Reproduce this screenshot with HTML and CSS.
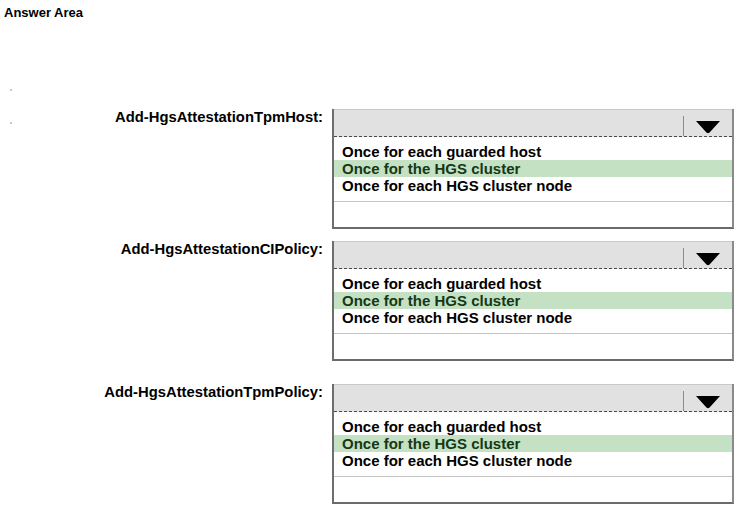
FILE: index.html
```html
<!DOCTYPE html>
<html lang="en">
<head>
<meta charset="utf-8">
<title>Answer Area</title>
<link rel="stylesheet" href="styles.css">
</head>
<body>
<main class="answer-area">
  <h1 class="title">Answer Area</h1>

  <div class="workspace">
    <div class="marks">
      <span class="mark"></span>
      <span class="mark"></span>
    </div>

    <div class="questions">
      <div class="question q1">
        <div class="label">Add-HgsAttestationTpmHost:</div>
        <div class="dropdown">
          <div class="dropdown-head">
            <span class="value"></span>
            <span class="toggle">
              <svg width="24" height="14" viewBox="0 0 24 14"><path d="M0 0H24L14.5 10.5Q12 14 9.5 10.5Z" fill="#000"/></svg>
            </span>
          </div>
          <ul class="options">
            <li>Once for each guarded host</li>
            <li class="selected">Once for the HGS cluster</li>
            <li>Once for each HGS cluster node</li>
          </ul>
          <div class="options-rest"></div>
        </div>
      </div>

      <div class="question q2">
        <div class="label">Add-HgsAttestationCIPolicy:</div>
        <div class="dropdown">
          <div class="dropdown-head">
            <span class="value"></span>
            <span class="toggle">
              <svg width="24" height="14" viewBox="0 0 24 14"><path d="M0 0H24L14.5 10.5Q12 14 9.5 10.5Z" fill="#000"/></svg>
            </span>
          </div>
          <ul class="options">
            <li>Once for each guarded host</li>
            <li class="selected">Once for the HGS cluster</li>
            <li>Once for each HGS cluster node</li>
          </ul>
          <div class="options-rest"></div>
        </div>
      </div>

      <div class="question q3">
        <div class="label">Add-HgsAttestationTpmPolicy:</div>
        <div class="dropdown">
          <div class="dropdown-head">
            <span class="value"></span>
            <span class="toggle">
              <svg width="24" height="14" viewBox="0 0 24 14"><path d="M0 0H24L14.5 10.5Q12 14 9.5 10.5Z" fill="#000"/></svg>
            </span>
          </div>
          <ul class="options">
            <li>Once for each guarded host</li>
            <li class="selected">Once for the HGS cluster</li>
            <li>Once for each HGS cluster node</li>
          </ul>
          <div class="options-rest"></div>
        </div>
      </div>
    </div>
  </div>
</main>
</body>
</html>
```

FILE: styles.css
```css
html, body {
  margin: 0;
  padding: 0;
  background: #fff;
}

body {
  font-family: "Liberation Sans", Arial, sans-serif;
  color: #000;
}

.answer-area {
  width: 740px;
  height: 514px;
}

.title {
  margin: 0;
  padding: 6px 0 0 4px;
  font-size: 13px;
  font-weight: bold;
  line-height: 14px;
}

.workspace {
  display: flex;
  margin-top: 60px;
}

/* faint registration marks down the left margin */
.marks {
  width: 20px;
  flex: none;
  display: flex;
  flex-direction: column;
  align-items: flex-start;
  gap: 31px;
  padding: 9px 0 0 10px;
  box-sizing: border-box;
}

.mark {
  width: 2px;
  height: 2px;
  background: #c8c8c8;
}

.questions {
  padding-top: 29px;
  display: flex;
  flex-direction: column;
}

.question {
  display: grid;
  grid-template-columns: 303px 402px;
  column-gap: 9px;
}

.q2 { margin-top: 12px; }
.q3 { margin-top: 23px; }

.label {
  text-align: right;
  font-size: 14.8px;
  font-weight: bold;
  line-height: 17px;
  padding-top: 0;
}

.dropdown {
  border-left: 2px solid #6e6e6e;
  border-right: 2px solid #8a8a8a;
  border-bottom: 2px solid #6a6a6a;
  background: #fff;
}

.dropdown-head {
  display: flex;
  height: 28px;
  background: #e1e1e1;
  border-top: 1px solid #c9c9c9;
  border-bottom: 1px dashed #4a4a4a;
  box-sizing: border-box;
}

.value {
  flex: 1;
}

.toggle {
  width: 49px;
  display: flex;
  align-items: flex-end;
  justify-content: center;
  padding-bottom: 1px;
  margin-top: 6px;
  border-left: 1px solid #8c8c8c;
  box-sizing: border-box;
}

.options {
  list-style: none;
  margin: 0;
  padding: 6px 0 7px;
  border-bottom: 1px solid #c4c4c4;
}

.options li {
  height: 17px;
  line-height: 17px;
  padding-left: 8px;
  font-size: 15px;
  font-weight: bold;
}

.options li.selected {
  background: #c4e1c4;
  color: #163816;
}

.options-rest {
  height: 25px;
}
```
